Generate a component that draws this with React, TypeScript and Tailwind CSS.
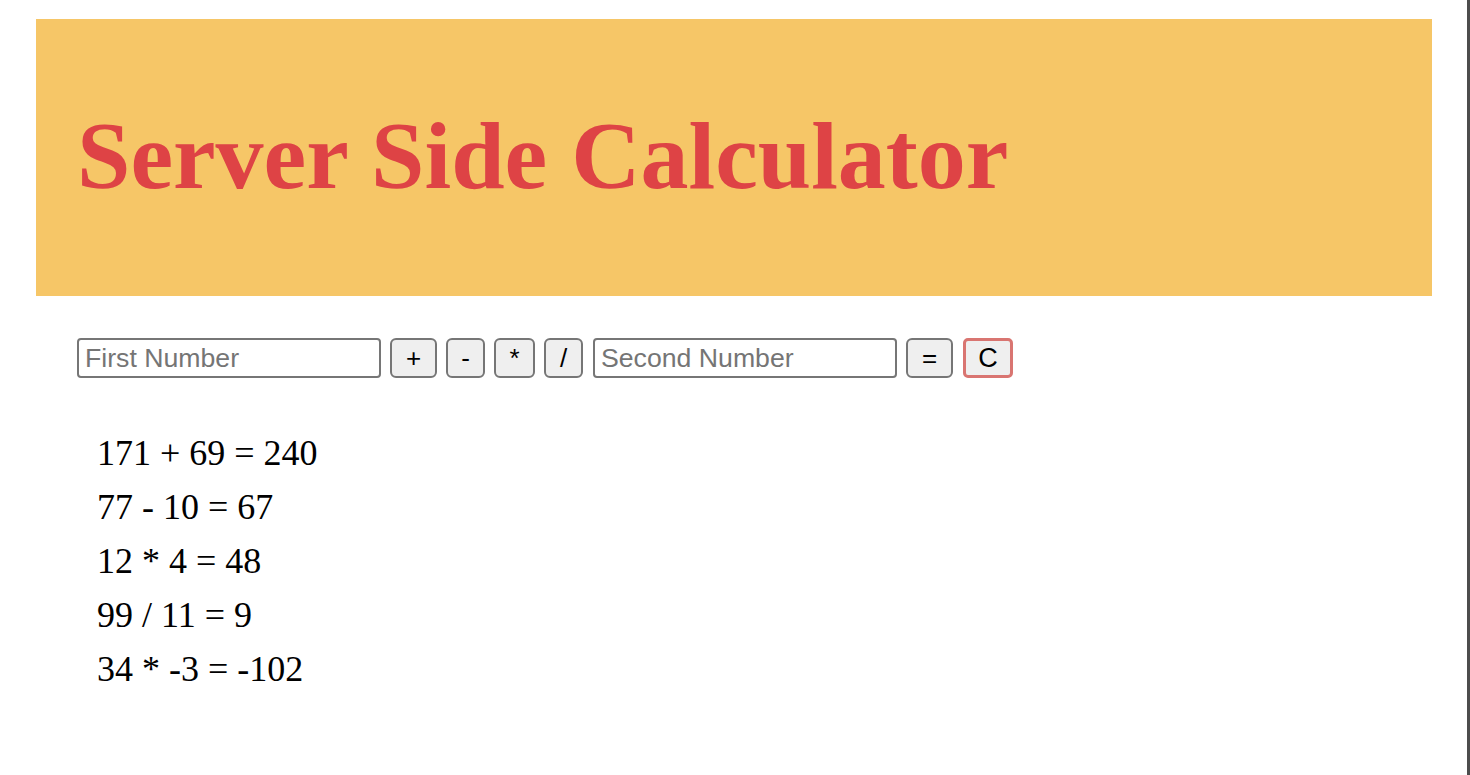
const history = [
  "171 + 69 = 240",
  "77 - 10 = 67",
  "12 * 4 = 48",
  "99 / 11 = 9",
  "34 * -3 = -102",
];

const operators = [
  { label: "+", width: "w-[47px]" },
  { label: "-", width: "w-[39px]" },
  { label: "*", width: "w-[41px]" },
  { label: "/", width: "w-[39px]" },
];

const inputClass =
  "h-[40px] w-[304px] rounded-[4px] border-2 border-[#767676] bg-white px-[6px] text-[26.67px] text-black placeholder:text-[#757575] focus:outline-none";

const buttonClass =
  "h-[40px] rounded-[6px] border-2 border-[#767676] bg-[#efefef] text-[26px] leading-none text-black";

export default function App() {
  return (
    <div
      className="flex min-h-screen w-full bg-white"
      style={{ fontFamily: '"Liberation Serif", "Times New Roman", serif' }}
    >
      <div className="flex-1 pl-[36px] pr-[35px] pt-[19px]">
        <header className="flex h-[277px] items-center bg-[#f6c667] pb-[3px] pl-[41px]">
          <h1 className="text-[96px] font-bold leading-none text-[#de4345]">
            Server Side Calculator
          </h1>
        </header>

        <div className="pl-[41px]">
          <div
            className="mt-[42px] flex items-center gap-[9px]"
            style={{ fontFamily: '"Liberation Sans", Arial, sans-serif' }}
          >
            <input className={inputClass} placeholder="First Number" />
            {operators.map((op) => (
              <button key={op.label} className={`${buttonClass} ${op.width}`}>
                {op.label}
              </button>
            ))}
            <input className={`${inputClass} ml-[1px]`} placeholder="Second Number" />
            <button className={`${buttonClass} w-[47px]`}>=</button>
            <button className="ml-[1px] h-[40px] w-[50px] rounded-[5px] border-[3px] border-[#d97571] bg-[#efefef] text-[27px] leading-none text-black">
              C
            </button>
          </div>

          <ul className="mt-[48px] pl-[20px]">
            {history.map((line) => (
              <li key={line} className="h-[54px] text-[36px] leading-[54px] text-black">
                {line}
              </li>
            ))}
          </ul>
        </div>
      </div>
      <div className="w-[3px] bg-[#4d4d4d]" />
    </div>
  );
}
